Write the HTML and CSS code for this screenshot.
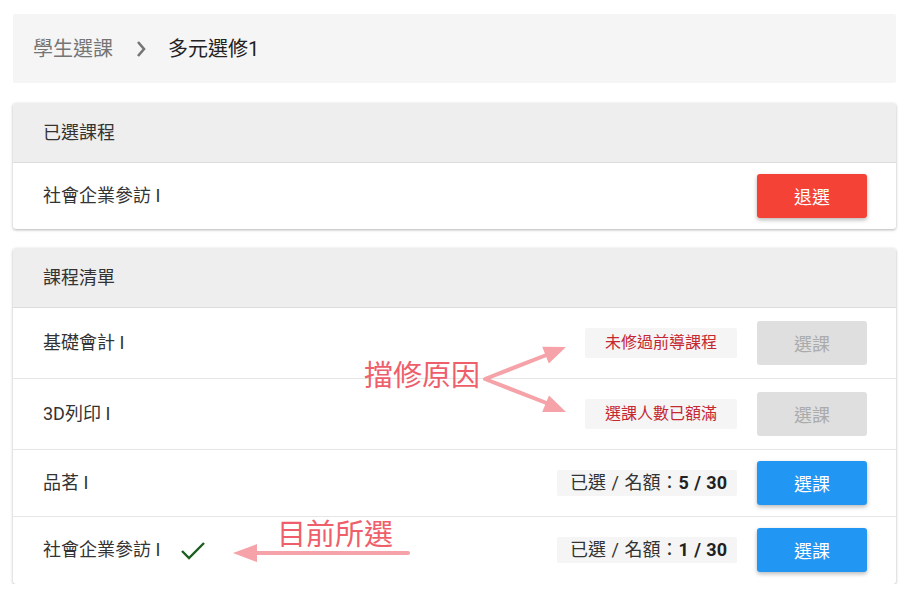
FILE: index.html
```html
<!DOCTYPE html>
<html lang="zh-TW">
<head>
  <meta charset="UTF-8" />
  <meta name="viewport" content="width=device-width, initial-scale=1.0" />
  <title>學生選課 – 多元選修1</title>
  <link rel="stylesheet" href="styles.css">
</head>
<body>
  <div class="page">
    <nav class="crumbs">
      <span class="crumb-link">學生選課</span>
      <svg class="crumb-sep" width="10" height="18" viewBox="0 0 10 18">
        <path d="M2 2 L8 9 L2 16" fill="none" stroke="#757575" stroke-width="2.6" />
      </svg>
      <span class="crumb-current">多元選修1</span>
    </nav>

    <section class="card">
      <div class="card-head">已選課程</div>
      <div class="row">
        <span class="course">社會企業參訪 I</span>
        <button type="button" class="btn btn-drop">退選</button>
      </div>
    </section>

    <section class="card">
      <div class="card-head">課程清單</div>
      <div class="row row-blocked">
        <span class="course">基礎會計 I</span>
        <span class="reason">未修過前導課程</span>
        <button type="button" class="btn btn-off" disabled>選課</button>
      </div>
      <div class="row row-blocked">
        <span class="course">3D列印 I</span>
        <span class="reason">選課人數已額滿</span>
        <button type="button" class="btn btn-off" disabled>選課</button>
      </div>
      <div class="row">
        <span class="course">品茗 I</span>
        <span class="quota">已選 / 名額：<b>5 / 30</b></span>
        <button type="button" class="btn btn-pick">選課</button>
      </div>
      <div class="row row-last">
        <span class="course">社會企業參訪 I
          <svg class="check" width="26" height="20" viewBox="0 0 26 20">
            <path d="M2 11 L9 18 L24 3" fill="none" stroke="#1b5e20" stroke-width="2.4" />
          </svg>
        </span>
        <span class="quota">已選 / 名額：<b>1 / 30</b></span>
        <button type="button" class="btn btn-pick">選課</button>
      </div>
    </section>

    <div class="notes">
      <svg class="note-arrows" width="907" height="597" viewBox="0 0 907 597">
        <g stroke="#f5a3a8" stroke-width="4" stroke-linecap="round" stroke-linejoin="round" fill="none">
          <polyline points="549,354 485,379 549,404" />
          <line x1="408" y1="553" x2="250" y2="553" />
        </g>
        <g fill="#f5a3a8">
          <polygon points="566,347 548.8,363.5 542.2,346.7" />
          <polygon points="566,412 542.2,412 549,395.4" />
          <polygon points="233,553 257,544 257,562" />
        </g>
      </svg>
      <span class="note note-block">擋修原因</span>
      <span class="note note-mine">目前所選</span>
    </div>
  </div>
</body>
</html>
```

FILE: styles.css
```css
body {
  margin: 0;
  font-family: Roboto, "Noto Sans CJK TC", sans-serif;
  color: #333;
  background: #fff;
}
.page {
  position: relative;
  padding: 14px 11px 0 13px;
}

.crumbs {
  display: flex;
  align-items: center;
  height: 69px;
  padding-left: 20px;
  background: #f5f5f5;
  border-radius: 2px;
  font-size: 20px;
  line-height: 1;
}
.crumb-link {
  color: #757575;
}
.crumb-sep {
  margin: 0 22px 0 23px;
}
.crumb-current {
  color: #222;
}

.card {
  margin-top: 20px;
  background: #fff;
  border-radius: 3px;
  box-shadow: 0 1px 3px rgba(0, 0, 0, 0.3);
  overflow: hidden;
}
.card + .card {
  margin-top: 19px;
}
.card-head {
  display: flex;
  align-items: center;
  height: 59px;
  padding-left: 30px;
  background: #eeeeee;
  border-bottom: 1px solid #dcdcdc;
  font-size: 18px;
  line-height: 1;
}

.row {
  display: flex;
  align-items: center;
  gap: 20px;
  padding: 11px 29px 11px 30px;
  font-size: 18px;
  line-height: 1;
}
.row + .row {
  border-top: 1px solid #e6e6e6;
}
.row-blocked {
  padding-top: 13px;
  padding-bottom: 13px;
}
.row-last {
  padding-bottom: 12px;
}
.course {
  display: flex;
  align-items: center;
  margin-right: auto;
}
.check {
  margin-left: 20px;
}

.reason {
  padding: 7px 20px;
  background: #f5f5f5;
  border-radius: 2px;
  color: #c62832;
  font-size: 16px;
}
.quota {
  padding: 4px 10px 4px 13px;
  background: #f5f5f5;
  border-radius: 2px;
  color: #333;
  word-spacing: 1px;
}
.quota b {
  font-weight: 700;
  color: #222;
}

.btn {
  width: 110px;
  height: 44px;
  border: none;
  border-radius: 3px;
  font-family: inherit;
  font-size: 18px;
  color: #fff;
  cursor: pointer;
}
.btn-drop {
  background: #f44336;
  box-shadow: 0 2px 4px rgba(0, 0, 0, 0.28);
}
.btn-pick {
  background: #2196f3;
  box-shadow: 0 2px 4px rgba(0, 0, 0, 0.28);
}
.btn-off {
  background: #dfdfdf;
  color: #ababab;
  cursor: default;
}

.notes {
  position: absolute;
  top: 0;
  left: 0;
  width: 907px;
  height: 597px;
  pointer-events: none;
}
.note-arrows {
  position: absolute;
  top: 0;
  left: 0;
}
.note {
  position: absolute;
  font-size: 29px;
  line-height: 1;
  font-weight: 400;
  color: #ee5f6b;
}
.note-block {
  left: 364px;
  top: 362px;
}
.note-mine {
  left: 277px;
  top: 521px;
}
```
